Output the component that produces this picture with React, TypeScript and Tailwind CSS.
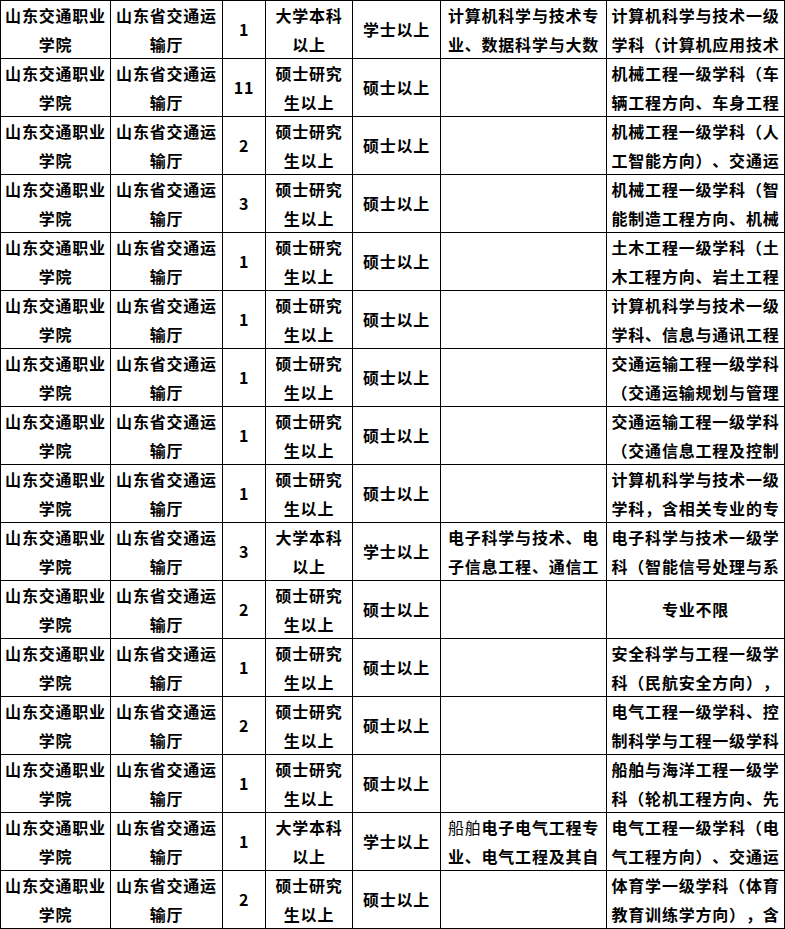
import React from "react";

type Row = {
  count: string;
  edu: string;
  degree: string;
  major: React.ReactNode;
  extra: string;
};

const MASTER = "硕士研究生以上";
const BACHELOR = "大学本科以上";

const rows: Row[] = [
  { count: "1", edu: BACHELOR, degree: "学士以上", major: "计算机科学与技术专业、数据科学与大数", extra: "计算机科学与技术一级学科（计算机应用技术" },
  { count: "11", edu: MASTER, degree: "硕士以上", major: "", extra: "机械工程一级学科（车辆工程方向、车身工程" },
  { count: "2", edu: MASTER, degree: "硕士以上", major: "", extra: "机械工程一级学科（人工智能方向）、交通运" },
  { count: "3", edu: MASTER, degree: "硕士以上", major: "", extra: "机械工程一级学科（智能制造工程方向、机械" },
  { count: "1", edu: MASTER, degree: "硕士以上", major: "", extra: "土木工程一级学科（土木工程方向、岩土工程" },
  { count: "1", edu: MASTER, degree: "硕士以上", major: "", extra: "计算机科学与技术一级学科、信息与通讯工程" },
  { count: "1", edu: MASTER, degree: "硕士以上", major: "", extra: "交通运输工程一级学科（交通运输规划与管理" },
  { count: "1", edu: MASTER, degree: "硕士以上", major: "", extra: "交通运输工程一级学科（交通信息工程及控制" },
  { count: "1", edu: MASTER, degree: "硕士以上", major: "", extra: "计算机科学与技术一级学科，含相关专业的专" },
  { count: "3", edu: BACHELOR, degree: "学士以上", major: "电子科学与技术、电子信息工程、通信工", extra: "电子科学与技术一级学科（智能信号处理与系" },
  { count: "2", edu: MASTER, degree: "硕士以上", major: "", extra: "专业不限" },
  { count: "1", edu: MASTER, degree: "硕士以上", major: "", extra: "安全科学与工程一级学科（民航安全方向），" },
  { count: "2", edu: MASTER, degree: "硕士以上", major: "", extra: "电气工程一级学科、控制科学与工程一级学科" },
  { count: "1", edu: MASTER, degree: "硕士以上", major: "", extra: "船舶与海洋工程一级学科（轮机工程方向、先" },
  {
    count: "1",
    edu: BACHELOR,
    degree: "学士以上",
    major: (
      <>
        <span className="font-normal">船舶</span>电子电气工程专业、电气工程及其自
      </>
    ),
    extra: "电气工程一级学科（电气工程方向）、交通运",
  },
  { count: "2", edu: MASTER, degree: "硕士以上", major: "", extra: "体育学一级学科（体育教育训练学方向），含" },
];

function Cell({ children }: { children?: React.ReactNode }) {
  return (
    <div className="bg-white h-[57px] overflow-hidden flex items-center-safe justify-center px-[3px] text-center leading-[29px]">
      <div className="w-full">{children}</div>
    </div>
  );
}

export default function App() {
  return (
    <div className="w-[785px] bg-white">
      <div
        className="grid grid-cols-[109px_111px_42px_86px_87px_165px_177px] gap-px p-px bg-black text-black text-[16px] tracking-[0.8px] font-bold [text-spacing-trim:space-all] [font-feature-settings:'chws'_0,'halt'_0]"
        style={{ fontFamily: '"Noto Sans CJK SC", "Noto Sans", sans-serif' }}
      >
        {rows.map((r, i) => (
          <React.Fragment key={i}>
            <Cell>山东交通职业学院</Cell>
            <Cell>山东省交通运输厅</Cell>
            <Cell>{r.count}</Cell>
            <Cell>{r.edu}</Cell>
            <Cell>{r.degree}</Cell>
            <Cell>{r.major}</Cell>
            <Cell>{r.extra}</Cell>
          </React.Fragment>
        ))}
      </div>
    </div>
  );
}
